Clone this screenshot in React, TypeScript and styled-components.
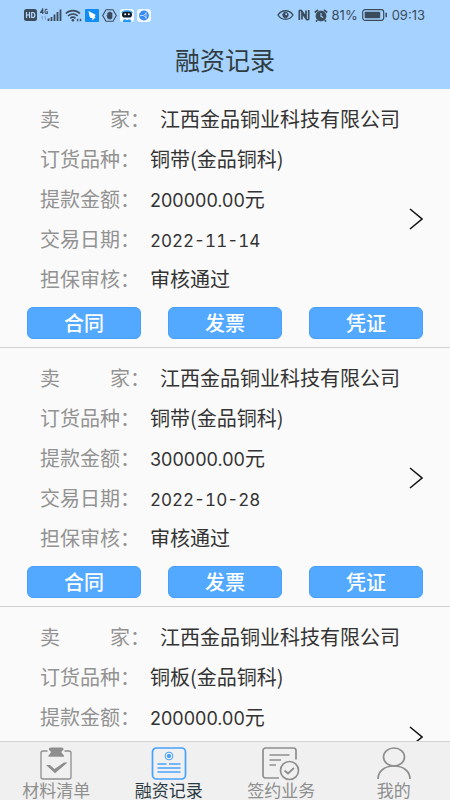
import React from "react";
import styled, { createGlobalStyle } from "styled-components";

const GlobalStyle = createGlobalStyle`
  *, *::before, *::after { box-sizing: border-box; }
  body { margin: 0; }
  body, button { font-family: "Noto Sans CJK SC", "Noto Sans", sans-serif; }
`;

const Screen = styled.div`
  display: flex;
  flex-direction: column;
  height: 100vh;
  background: #fafafa;
  color: #333;
`;

const Header = styled.header`
  flex: none;
  background: #a6d2ff;
`;

const StatusBar = styled.div`
  display: flex;
  justify-content: space-between;
  align-items: center;
  height: 30px;
  padding: 0 25px 0 24px;
  color: #3a4b5c;
`;

const StatusGroup = styled.div<{ $gap: number }>`
  display: flex;
  align-items: center;
  gap: ${(p) => p.$gap}px;

  svg { display: block; }
`;

const StatusText = styled.span`
  font-family: Inter, "Noto Sans", sans-serif;
  font-size: 13px;
  line-height: 16px;
`;

const Title = styled.h1`
  margin: 0;
  height: 59px;
  font-size: 25px;
  font-weight: 400;
  line-height: 58px;
  text-align: center;
  color: #2f3b40;
`;

const RecordList = styled.main`
  flex: 1;
  min-height: 0;
  overflow-y: auto;
  scrollbar-width: none;
`;

const Record = styled.section`
  display: grid;
  row-gap: 8px;
  padding: 10px 27px 8px;
  border-bottom: 1px solid #d2d2d2;
`;

const Fields = styled.dl`
  grid-area: 1 / 1;
  margin: 0;
  padding-left: 13px;
`;

const Field = styled.div`
  display: flex;
  gap: 10px;
  height: 40px;
  font-size: 20px;
  line-height: 40px;
  white-space: nowrap;
`;

const FieldName = styled.dt<{ $wide?: boolean }>`
  display: flex;
  justify-content: space-between;
  width: ${(p) => (p.$wide ? 110 : 100)}px;
  color: #929292;
`;

const FieldValue = styled.dd`
  margin: 0;
`;

const Digits = styled.span`
  font-family: Inter, "Noto Sans", sans-serif;
  font-size: 18px;
`;

const DateDigits = styled(Digits)`
  font-size: 17px;
  font-variant-numeric: tabular-nums;
`;

const OpenButton = styled.button`
  grid-area: 1 / 1 / 3 / 2;
  align-self: center;
  justify-self: end;
  padding: 0;
  border: 0;
  background: none;
  color: #111;
  cursor: pointer;

  svg { display: block; }
`;

const Actions = styled.div`
  grid-area: 2 / 1;
  display: grid;
  grid-template-columns: repeat(3, 1fr);
  column-gap: 27px;
`;

const ActionButton = styled.button`
  height: 32px;
  padding: 0;
  border: 1px solid #489ffb;
  border-radius: 6px;
  background: #52a9ff;
  color: #fff;
  font-size: 20px;
  font-weight: 500;
  line-height: 30px;
  cursor: pointer;
`;

const TabBar = styled.nav`
  flex: none;
  display: grid;
  grid-template-columns: repeat(4, 1fr);
  height: 59px;
  border-top: 1px solid #d4d4d4;
  background: #f0f0f0;
`;

const Tab = styled.button<{ $active?: boolean }>`
  display: flex;
  flex-direction: column;
  align-items: center;
  padding: 4px 0 0;
  border: 0;
  background: none;
  color: ${(p) => (p.$active ? "#2b3a42" : "#8e8e8e")};
  font-size: 17px;
  line-height: 16px;
  cursor: pointer;

  svg { display: block; }
`;

const HdIcon = () => (
  <svg width="13" height="12" viewBox="0 0 13 12" aria-hidden="true">
    <rect width="13" height="12" rx="2.500" fill="currentColor" />
    <path d="M2.500 3v6M5.500 3v6M2.500 6h3M7.700 3.500v5h1c1.400 0 2.200-1 2.200-2.500s-.8-2.500-2.200-2.500z" fill="none" stroke="#b5daff" strokeWidth="1.200" />
  </svg>
);

const SignalIcon = () => (
  <svg width="22" height="14" viewBox="0 0 22 14" fill="none" stroke="currentColor" aria-hidden="true">
    <path d="M2.700 6V1L.6 4.400h3M7.400 1.700C6.800.9 5 1 5 3.500S6.800 6 7.400 5.200V3.700H6.300" strokeWidth="1.100" />
    <path d="M1 9.500l1.500-1v3.500M4 9.500l1.500-1v3.500" strokeWidth=".8" opacity=".35" />
    <path d="M8.500 13v-2.500M11.500 13V9M14.500 13V6.500M17.500 13V4M20.500 13V1.500" strokeWidth="1.800" />
  </svg>
);

const WifiIcon = () => (
  <svg width="17" height="13" viewBox="0 0 17 13" fill="none" stroke="currentColor" aria-hidden="true">
    <path d="M.8 4.500c4-3.900 10.200-3.900 14.200 0M3 7c2.800-2.600 7-2.600 9.800 0M5.300 9.300c1.500-1.300 3.700-1.300 5.200 0" strokeWidth="1.600" />
    <circle cx="7.900" cy="11.200" r="1.300" fill="currentColor" stroke="none" />
    <path d="M11.300 11l2-1.700v3.400zM16.800 11l-2-1.700v3.400z" fill="currentColor" stroke="none" />
  </svg>
);

const BirdIcon = () => (
  <svg width="14" height="13" viewBox="0 0 14 13" aria-hidden="true">
    <rect width="14" height="13" rx="1" fill="#0f8df5" />
    <path d="M3.500 2l6.200 3.200c.8.400.8 1 .5 1.600L9.500 8h1.200L7.300 11.700l.4-2.400c-1.600 0-2.500-.6-3-1.600L4 5z" fill="#fff" />
  </svg>
);

const HexagonIcon = () => (
  <svg width="15" height="13" viewBox="0 0 15 13" aria-hidden="true">
    <path d="M4 .8h7l3.300 5.700L11 12.200H4L.7 6.500z" fill="none" stroke="currentColor" strokeWidth="1.100" />
    <path d="M4.300 5.800l1 .8V3.800h1V3h1.100v-.6h1V3h1v.7h1V8c0 1.500-1 2.500-2.300 2.500S5.700 10 5.200 8.800z" fill="currentColor" />
  </svg>
);

const RobotIcon = () => (
  <svg width="14" height="13" viewBox="0 0 14 13" aria-hidden="true">
    <rect width="14" height="13" rx="3" fill="#f3faff" />
    <path d="M1 4C2 0 12 0 13 4z" fill="#4aaef4" />
    <rect x="2" y="2.800" width="10" height="5.700" rx="2.800" fill="#111d2c" />
    <circle cx="5.200" cy="5.300" r="1" fill="#fff" />
    <circle cx="8.800" cy="5.300" r="1" fill="#fff" />
    <path d="M3.500 10.500h2.300l1.200.7 1.200-.7h2.300l.7 2.500H2.800z" fill="#2196f3" />
  </svg>
);

const GlobeIcon = () => (
  <svg width="14" height="13" viewBox="0 0 14 13" aria-hidden="true">
    <rect width="14" height="13" rx="3" fill="#eef7ff" />
    <circle cx="7" cy="6.500" r="4.900" fill="#3b8df2" />
    <path d="M3 6.500h3.500l3-2.700M6.500 6.500l3 2.700M9 3.500v6" fill="none" stroke="#cfe6ff" strokeWidth=".8" />
  </svg>
);

const EyeIcon = () => (
  <svg width="17" height="12" viewBox="0 0 17 12" fill="none" stroke="currentColor" aria-hidden="true">
    <path d="M1 6c3.500-5.600 11.500-5.600 15 0-3.500 5.600-11.500 5.600-15 0z" strokeWidth="1.400" />
    <circle cx="8.500" cy="6" r="2.700" fill="currentColor" />
    <circle cx="9.200" cy="5.200" r="1" fill="#a6d2ff" stroke="none" />
  </svg>
);

const NfcIcon = () => (
  <svg width="12" height="12" viewBox="0 0 12 12" fill="none" stroke="currentColor" aria-hidden="true">
    <path d="M1.300 11V2c0-.9 1.600-1 2.200-.2L8 8.200V1.500" strokeWidth="1.700" />
    <path d="M10.700 1v9c0 .9-1.600 1-2.200.2L4 3.800v6.700" strokeWidth="1.700" />
  </svg>
);

const AlarmIcon = () => (
  <svg width="14" height="13" viewBox="0 0 14 13" fill="none" stroke="currentColor" aria-hidden="true">
    <circle cx="7" cy="7" r="4.900" fill="currentColor" />
    <path d="M.8 3.500L4 1M13.200 3.500L10 1M3.300 11l-1.300 1.500M10.700 11l1.300 1.500" strokeWidth="1.700" />
    <path d="M7 4v3.300l2.200 1.200" stroke="#a6d2ff" strokeWidth="1.100" />
  </svg>
);

const BatteryIcon = () => (
  <svg width="26" height="12" viewBox="0 0 26 12" aria-hidden="true">
    <rect x=".7" y=".7" width="21" height="10.600" rx="2.500" fill="none" stroke="currentColor" strokeWidth="1.200" />
    <rect x="2.700" y="2.700" width="15.500" height="6.600" rx=".8" fill="currentColor" />
    <path d="M24.200 3.800v4.400" stroke="currentColor" strokeWidth="1.500" />
  </svg>
);

const ChevronIcon = () => (
  <svg width="14" height="22" viewBox="0 0 14 22" fill="none" stroke="currentColor" aria-hidden="true">
    <path d="M1 1l12 10L1 21" strokeWidth="1.500" />
  </svg>
);

const ClipboardIcon = () => (
  <svg width="36" height="36" viewBox="0 0 36 36" fill="none" stroke="#8e8e8e" aria-hidden="true">
    <path d="M9.500 5H5a2 2 0 0 0-2 2v24a2 2 0 0 0 2 2h26a2 2 0 0 0 2-2V7a2 2 0 0 0-2-2h-4.500" strokeWidth="1.300" />
    <path d="M13 1.500h10.500c1.500 0 2 .8 2 1.500s-.6 1.600-1.600 2.300c-.6.500-.6 1 0 1.700l2 2.500v1.300H10.500V9.500l2-2.500c.6-.7.600-1.200 0-1.700-1-.7-1.600-1.600-1.600-2.300s.6-1.500 2.100-1.500z" fill="#8e8e8e" stroke="none" />
    <path d="M8 19h4l4.500 4 9.500-6.500h3.500L17 27.300z" fill="#8e8e8e" stroke="none" />
  </svg>
);

const LedgerIcon = () => (
  <svg width="36" height="36" viewBox="0 0 36 36" fill="none" stroke="#46a2fa" aria-hidden="true">
    <rect x="1.500" y="2" width="33" height="31" rx="4" strokeWidth="1.700" />
    <circle cx="18" cy="10" r="3.900" strokeWidth="1" />
    <circle cx="18" cy="10" r="1.700" fill="#46a2fa" />
    <path d="M6.500 18h9M18 18h11.500M6.500 22h23M6.500 26h23" strokeWidth="1.500" />
  </svg>
);

const ContractIcon = () => (
  <svg width="38" height="36" viewBox="0 0 38 36" fill="none" stroke="#8e8e8e" strokeWidth="1.700" aria-hidden="true">
    <path d="M34 13.500V4.500a2.500 2.500 0 0 0-2.500-2.500h-28A2.500 2.500 0 0 0 1 4.500v25A2.500 2.500 0 0 0 3.500 32H17" />
    <path d="M7.500 9h20M7.500 14h11.500M7.500 19h6.500" strokeWidth="1.500" />
    <circle cx="27.500" cy="24.500" r="9" />
    <path d="M22.500 24.500l3.500 3 6-5.500" />
  </svg>
);

const PersonIcon = () => (
  <svg width="36" height="36" viewBox="0 0 36 36" fill="none" stroke="#8e8e8e" strokeWidth="1.700" aria-hidden="true">
    <ellipse cx="18" cy="11" rx="10.500" ry="9" />
    <path d="M2 33c0-8 7-13 16-13s16 5 16 13" />
  </svg>
);

type Entry = {
  seller: string;
  product: string;
  amount: string;
  date: string;
  review: string;
};

const seller = "江西金品铜业科技有限公司";

const entries: Entry[] = [
  { seller, product: "铜带(金品铜科)", amount: "200000.00", date: "2022-11-14", review: "审核通过" },
  { seller, product: "铜带(金品铜科)", amount: "300000.00", date: "2022-10-28", review: "审核通过" },
  { seller, product: "铜板(金品铜科)", amount: "200000.00", date: "2022-10-28", review: "审核通过" },
];

const actions = ["合同", "发票", "凭证"];

const tabs = [
  { label: "材料清单", Icon: ClipboardIcon },
  { label: "融资记录", Icon: LedgerIcon },
  { label: "签约业务", Icon: ContractIcon },
  { label: "我的", Icon: PersonIcon },
];

const RecordItem = ({ entry }: { entry: Entry }) => (
  <Record>
    <Fields>
      <Field>
        <FieldName $wide>
          <span>卖</span>
          <span>家：</span>
        </FieldName>
        <FieldValue>{entry.seller}</FieldValue>
      </Field>
      <Field>
        <FieldName>订货品种：</FieldName>
        <FieldValue>{entry.product}</FieldValue>
      </Field>
      <Field>
        <FieldName>提款金额：</FieldName>
        <FieldValue>
          <Digits>{entry.amount}</Digits>元
        </FieldValue>
      </Field>
      <Field>
        <FieldName>交易日期：</FieldName>
        <FieldValue>
          <DateDigits>{entry.date}</DateDigits>
        </FieldValue>
      </Field>
      <Field>
        <FieldName>担保审核：</FieldName>
        <FieldValue>{entry.review}</FieldValue>
      </Field>
    </Fields>
    <OpenButton type="button" aria-label="查看详情">
      <ChevronIcon />
    </OpenButton>
    <Actions>
      {actions.map((action) => (
        <ActionButton key={action} type="button">{action}</ActionButton>
      ))}
    </Actions>
  </Record>
);

export default function App() {
  const [current, setCurrent] = React.useState("融资记录");

  return (
    <Screen lang="zh-CN">
      <GlobalStyle />
      <Header>
        <StatusBar>
          <StatusGroup $gap={3}>
            <HdIcon />
            <SignalIcon />
            <WifiIcon />
            <BirdIcon />
            <HexagonIcon />
            <RobotIcon />
            <GlobeIcon />
          </StatusGroup>
          <StatusGroup $gap={4}>
            <EyeIcon />
            <NfcIcon />
            <AlarmIcon />
            <StatusText>81%</StatusText>
            <BatteryIcon />
            <StatusText>09:13</StatusText>
          </StatusGroup>
        </StatusBar>
        <Title>融资记录</Title>
      </Header>
      <RecordList>
        {entries.map((entry, index) => (
          <RecordItem key={index} entry={entry} />
        ))}
      </RecordList>
      <TabBar>
        {tabs.map(({ label, Icon }) => (
          <Tab
            key={label}
            type="button"
            $active={label === current}
            aria-current={label === current ? "page" : undefined}
            onClick={() => setCurrent(label)}
          >
            <Icon />
            {label}
          </Tab>
        ))}
      </TabBar>
    </Screen>
  );
}
